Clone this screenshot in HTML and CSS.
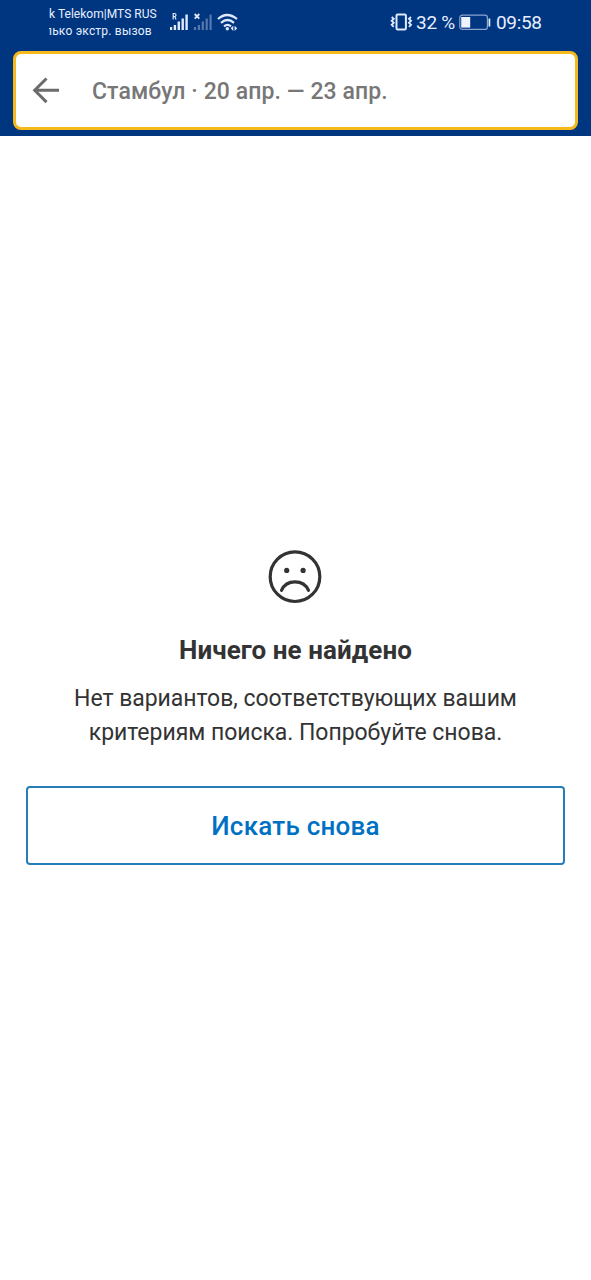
FILE: index.html
```html
<!DOCTYPE html>
<html lang="ru">
<head>
<meta charset="utf-8">
<title>Ничего не найдено</title>
<link rel="stylesheet" href="styles.css">
</head>
<body>
<header class="header">
  <div class="status">
    <div class="carriers"><div class="carrier">k Telekom|MTS RUS</div><div class="carrier carrier-cut">лько экстр. вызов</div></div>
    <svg class="signals" width="70" height="20" viewBox="0 0 70 20" fill="none" stroke="#dfeaff">
      <path d="M1 18v-3M4.900 18v-5M8.800 18V9.500M12.700 18V6.500M16.600 18V2.500" stroke-width="2.400"/>
      <path d="M3.200 7.500V1.500h1.300a1.500 1.500 0 0 1 0 3H3.200M4.700 4.500l1.400 3" stroke-width="1.200"/>
      <path d="M25 18v-3M28.900 18v-5M32.800 18V9.500M36.700 18V6.500M40.600 18V2.500" stroke="#5678ad" stroke-width="2.200"/>
      <path d="M24.700 2l4.600 4.600M29.300 2l-4.600 4.600" stroke-width="1.800"/>
      <path d="M48 7q9-8 19 0M51 10.800q6.500-5.600 13 0M54 14.300q3.500-2.800 7 0" stroke-width="2.200"/>
      <circle cx="57.300" cy="16.700" r="1.700" fill="#dfeaff" stroke="none"/>
      <path d="M63.300 13.700v5.200l-2.600-2.600zM64.600 13.700v5.200l2.600-2.600z" fill="#dfeaff" stroke="none"/>
    </svg>
    <svg class="vibrate" width="24" height="20" viewBox="0 0 24 20" fill="none" stroke="#dfeaff">
      <rect x="7.500" y="2.400" width="9.400" height="15" rx="1.200" stroke-width="2"/>
      <path d="M2.700 5l2 1.800-2 2 2 2-2 2 2 2M22 5l-2 1.800 2 2-2 2 2 2-2 2" stroke-width="1.900"/>
    </svg>
    <span class="percent">32 %</span>
    <svg class="battery" width="33" height="17" viewBox="0 0 33 17">
      <rect x=".8" y="1.200" width="27.600" height="14.200" rx="2.500" fill="none" stroke="#8ba5cf" stroke-width="1.200"/>
      <rect x="2.200" y="3" width="9" height="10.600" fill="#edf3ff"/>
      <rect x="29.500" y="4.500" width="1.800" height="8" fill="#dfeaff"/>
    </svg>
    <time class="clock">09:58</time>
  </div>
  <div class="search">
    <svg class="back" width="28" height="28" viewBox="0 0 28 28" fill="none" stroke="#6b6b6b" stroke-width="3"><path d="M27 13.300H3M14.500 1.500L2.700 13.300l11.800 11.800"/></svg>
    <span class="query">Стамбул · 20 апр. — 23 апр.</span>
  </div>
</header>
<main class="empty">
  <svg class="face" width="55" height="54" viewBox="0 0 55 54" fill="none" stroke="#333" stroke-width="3.200">
    <circle cx="27" cy="26.700" r="24.800"/>
    <path d="M13.500 40.400c5-11.300 22-11.300 27 0" stroke-linecap="round"/>
    <g fill="#333" stroke="none"><circle cx="18.700" cy="20.400" r="2.600"/><circle cx="35.100" cy="20.400" r="2.600"/></g>
  </svg>
  <h1 class="title">Ничего не найдено</h1>
  <p class="message">Нет вариантов, соответствующих вашим<br>критериям поиска. Попробуйте снова.</p>
  <button class="again">Искать снова</button>
</main>
</body>
</html>
```
FILE: styles.css
```css
* { box-sizing: border-box; }
body { margin: 0; min-height: 1280px; background: #fff; font-family: Roboto, "Noto Sans", sans-serif; }
.header { height: 136px; background: #003580; }
.status { height: 51px; display: flex; align-items: flex-start; color: #e6efff; padding-left: 49px; }
.carriers { width: 112px; padding-top: 5px; overflow: hidden; font-size: 12px; line-height: 17.500px; white-space: nowrap; }
.carrier { padding-top: .5px; letter-spacing: .03px; }
.carrier-cut { margin: -.5px 0 0 -4px; letter-spacing: .2px; }
.signals { margin: 12px 0 0 9px; flex: none; }
.vibrate { margin: 12px 0 0 149px; flex: none; }
.percent { margin: 12px 0 0 3px; width: 43px; font-size: 19px; line-height: 22px; letter-spacing: -.3px; white-space: nowrap; }
.battery { margin: 14px 0 0 0; flex: none; }
.clock { margin: 12px 0 0 4px; font-size: 19px; line-height: 22px; letter-spacing: -.35px; }
.search { margin: 0 13px; height: 79px; border: 3px solid #f6b91c; border-radius: 8px; background: #fff; display: flex; align-items: center; padding-left: 16px; }
.back { flex: none; }
.query { margin-left: 32px; padding-top: 1px; font-size: 23px; font-weight: 500; letter-spacing: .09px; color: #777; white-space: nowrap; }
.empty { padding: 414px 26px 0; display: flex; flex-direction: column; align-items: center; color: #333; }
.title { margin: 30px 0 0; font-size: 26px; line-height: 32px; font-weight: 700; letter-spacing: .08px; white-space: nowrap; }
.message { margin: 16px 0 0; font-size: 23px; line-height: 34px; letter-spacing: -.04px; text-align: center; white-space: nowrap; }
.again { margin: 36px 0 0; width: 539px; height: 79px; border: 2px solid #287db8; border-radius: 4px; background: #fff; color: #0071c2; font: 500 26px Roboto, "Noto Sans", sans-serif; letter-spacing: .22px; padding: 1px 0 0; }
```
